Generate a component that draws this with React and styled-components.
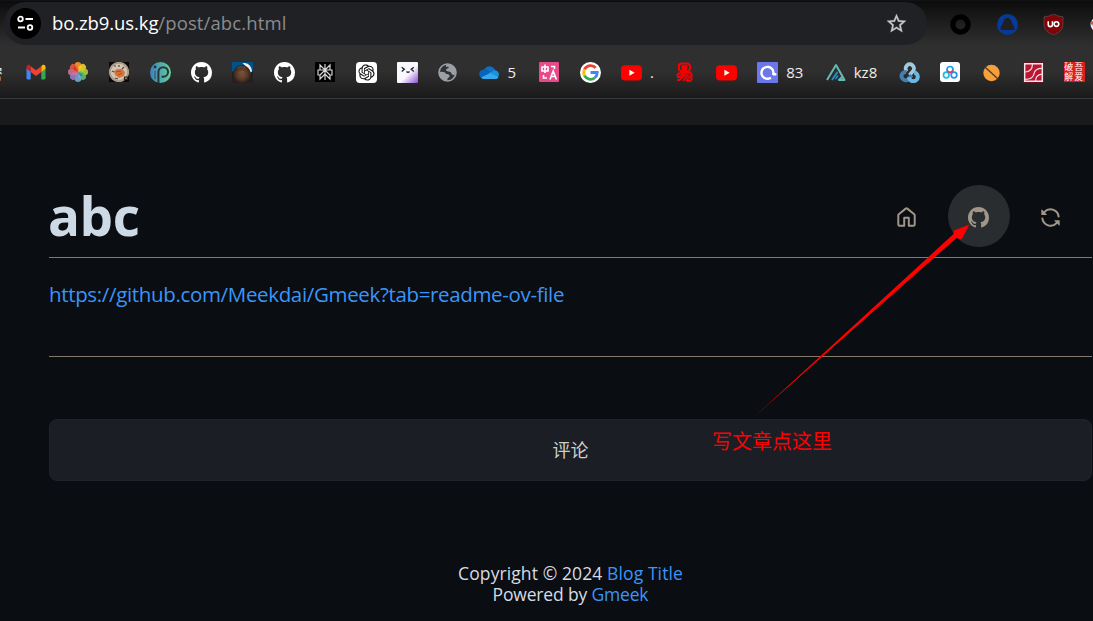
import React from 'react';
import styled, { createGlobalStyle } from 'styled-components';

const Global = createGlobalStyle`
  * { box-sizing: border-box; }
  body { margin: 0; background: #0a0d11; font-family: "Open Sans", "Noto Sans", "Noto Sans CJK SC", sans-serif; overflow: hidden; }
  svg { display: block; flex: none; }
`;

const Window = styled.div`
  position: relative;
  width: 1093px;
  height: 621px;
  overflow: hidden;
  background: #0a0d11;
  display: flex;
  flex-direction: column;
`;

const Chrome = styled.header`
  height: 99px;
  flex: none;
  border-top: 1px solid #111213;
  border-bottom: 1px solid #3a3939;
  background: linear-gradient(#0c0c0c 0, #131313 8px, #2f2f2f 45px, #2f2f2f 70px, #1a1a1a 97px);
`;

const AddressRow = styled.div`
  display: flex;
  height: 45px;
  padding: 1px 0 0 4px;
`;

const AddressBar = styled.div`
  flex: none;
  width: 923px;
  height: 43px;
  border-radius: 22px;
  background: #202124;
  display: flex;
  align-items: center;
  padding: 0 19px 0 6px;
`;

const SiteButton = styled.span`
  width: 31px;
  height: 31px;
  border-radius: 50%;
  background: #000;
  display: grid;
  place-items: center;
`;

const Address = styled.span`
  flex: 1;
  margin-left: 11px;
  margin-top: -1px;
  font-size: 18.5px;
  line-height: 24px;
  letter-spacing: 0.12px;
  color: #8b8c8e;
  white-space: nowrap;
`;

const Host = styled.span`
  color: #fff;
  letter-spacing: -0.1px;
`;

const Extensions = styled.div`
  display: flex;
  align-items: center;
  gap: 25.5px;
  padding-left: 23px;
  white-space: nowrap;
`;

const Bookmarks = styled.nav`
  display: flex;
  align-items: center;
  gap: 21.2px;
  height: 52px;
  margin-left: -12.5px;
`;

const Bookmark = styled.span`
  display: flex;
  align-items: center;
  flex: none;
  gap: 8px;
  width: ${p => p.$width || 20}px;
  height: 20px;
  font-size: 15px;
  color: #eee;
  white-space: nowrap;
`;

const Strip = styled.div`
  height: 26px;
  flex: none;
  background: #191a1b;
`;

const Page = styled.main`
  flex: 1;
  padding: 60px 1px 0 49px;
`;

const Header = styled.div`
  display: flex;
  justify-content: space-between;
  height: 73px;
  border-bottom: 1px solid #82796b;
`;

const Title = styled.h1`
  margin: 0 0 0 -1px;
  font-size: 53px;
  line-height: 62px;
  font-weight: 700;
  letter-spacing: -0.4px;
  color: #cddae6;
`;

const Actions = styled.div`
  display: flex;
  gap: 10px;
  padding-right: 10px;
`;

const ActionButton = styled.button`
  width: 62px;
  height: 62px;
  padding: 2px 2px 0 0;
  border: 0;
  border-radius: 50%;
  display: grid;
  place-items: center;
  background: ${p => (p.$active ? '#292d2f' : 'transparent')};
  color: #a19689;
`;

const Body = styled.article`
  height: 99px;
  padding-top: 22px;
  border-bottom: 1px solid #82796b;
  font-size: 20.5px;
  line-height: 28px;
  letter-spacing: -0.34px;
`;

const Link = styled.a`
  color: #3c95f8;
`;

const Comments = styled.button`
  display: block;
  width: 100%;
  height: 62px;
  margin-top: 62px;
  padding: 0 0 2px;
  border: 1px solid #20242a;
  border-radius: 8px;
  background: #1c1e25;
  color: #d2cec8;
  font: 18px "Noto Sans CJK SC", sans-serif;
`;

const Footer = styled.footer`
  margin-top: 82px;
  text-align: center;
  font-size: 17.5px;
  line-height: 21px;
  color: #d5dce3;
`;

const FooterLine = styled.div`
  letter-spacing: ${p => p.$spacing};
`;

const Annotation = styled.div`
  position: absolute;
  left: 712px;
  top: 426px;
  font: 20px/30px "Noto Sans CJK SC", sans-serif;
  color: #f00;
  white-space: nowrap;
`;

const ArrowLayer = styled.svg`
  position: absolute;
  left: 750px;
  top: 220px;
`;

const octocat = 'M8 0C3.58 0 0 3.58 0 8c0 3.54 2.29 6.53 5.47 7.59.4.07.55-.17.55-.38 0-.19-.01-.82-.01-1.49-2.01.37-2.53-.49-2.69-.94-.09-.23-.48-.94-.82-1.13-.28-.15-.68-.52-.01-.53.63-.01 1.08.58 1.23.82.72 1.21 1.87.87 2.33.66.07-.52.28-.87.51-1.07-1.78-.2-3.64-.89-3.64-3.95 0-.87.31-1.59.82-2.15-.08-.2-.36-1.02.08-2.12 0 0 .67-.21 2.2.82.64-.18 1.32-.27 2-.27s1.36.09 2 .27c1.53-1.04 2.2-.82 2.2-.82.44 1.1.16 1.92.08 2.12.51.56.82 1.27.82 2.15 0 3.07-1.87 3.75-3.65 3.95.29.25.54.73.54 1.48 0 1.07-.01 1.93-.01 2.2 0 .21.15.46.55.38A8.01 8.01 0 0 0 16 8c0-4.42-3.58-8-8-8Z';
const home = 'M6.906.664a1.749 1.749 0 0 1 2.187 0l5.25 4.2c.415.332.657.835.657 1.367v7.019A1.75 1.75 0 0 1 13.25 15h-3.5a.75.75 0 0 1-.75-.75V9H7v5.25a.75.75 0 0 1-.75.75h-3.5A1.75 1.75 0 0 1 1 13.25V6.23c0-.531.242-1.034.657-1.366l5.25-4.2Zm1.25 1.171a.25.25 0 0 0-.312 0l-5.25 4.2a.25.25 0 0 0-.094.196v7.019c0 .138.112.25.25.25H5.5V8.25a.75.75 0 0 1 .75-.75h3.5a.75.75 0 0 1 .75.75v5.25h2.75a.25.25 0 0 0 .25-.25V6.23a.25.25 0 0 0-.094-.195Z';
const sync = 'M1.705 8.005a.75.75 0 0 1 .834.656 5.5 5.5 0 0 0 9.592 2.97l-1.204-1.204a.25.25 0 0 1 .177-.427h3.646a.25.25 0 0 1 .25.25v3.646a.25.25 0 0 1-.427.177l-1.38-1.38A7.002 7.002 0 0 1 1.05 8.84a.75.75 0 0 1 .656-.834ZM8 2.5a5.487 5.487 0 0 0-4.131 1.869l1.204 1.204A.25.25 0 0 1 4.896 6H1.25A.25.25 0 0 1 1 5.75V2.104a.25.25 0 0 1 .427-.177l1.38 1.38A7.002 7.002 0 0 1 14.95 7.16a.75.75 0 0 1-1.49.178A5.5 5.5 0 0 0 8 2.5Z';

const Octicon = ({ d, size = 21, color = 'currentColor' }) => (
  <svg width={size} height={size} viewBox="0 0 16 16" fill={color}><path d={d} /></svg>
);
const Icon = ({ children, size = 20 }) => (
  <svg width={size} height={size} viewBox="0 0 20 20" fill="none">{children}</svg>
);

const Gmail = () => (
  <Icon>
    <path d="M.5 6v10.2c0 .7.5 1.2 1.2 1.2h3V9Z" fill="#4285f4" />
    <path d="M15.3 9v8.4h3c.7 0 1.2-.5 1.2-1.2V6Z" fill="#34a853" />
    <path d="M15.3 4.4V10l4.2-3.2V5c0-2-2-2.700-3.300-1.700Z" fill="#fbbc04" />
    <path d="M.5 6.800 4.700 10V4.400L3.800 3.300C2.500 2.300.5 3 .5 5Z" fill="#c5221f" />
    <path d="M4.700 10V4.200L10 8.200l5.300-4V10L10 14Z" fill="#ea4335" />
  </Icon>
);
const petals = ['#ff9d1e', '#f2d52a', '#b7d332', '#62b97d', '#6eafd8', '#9281c1', '#c576aa', '#ef5b44'];
const Photos = () => (
  <Icon>
    {petals.map((c, i) => (
      <rect key={c} x="6.800" y="0" width="6.400" height="9.500" rx="3.200" fill={c} opacity=".88" transform={`rotate(${i * 45} 10 10)`} />
    ))}
    <path d="m10 10-5-3 2-3 3 6M10 10l-5 2" fill="#c52325" opacity=".7" />
    <path d="m10 10 5 2-2 3-3-5" fill="#268c57" opacity=".8" />
  </Icon>
);
const Plate = () => (
  <Icon>
    <path fill="#080808" d="M0 0h20v20H0z" />
    <circle cx="10" cy="10" r="10.200" fill="#a89a88" />
    <circle cx="10" cy="10" r="8.300" fill="#d2c5b3" />
    <path d="m5 9 3-2h5l3 3-1 4-5 2-4-3Z" fill="#d9743b" />
    <path d="M5 4h2m3-1v2m5 0-2 2M3 9l2 1m1 6 3 1" stroke="#504840" strokeWidth="1.200" />
    <path d="m7 10 5-1m-3 4 4-2" stroke="#a84721" />
    <path d="M15.500 19v-4h3v2.500h-3" stroke="#29251f" strokeWidth="1.200" />
  </Icon>
);
const PMark = () => (
  <Icon size={21}>
    <defs><linearGradient id="pg"><stop stopColor="#3d82bd" /><stop offset="1" stopColor="#67cf99" /></linearGradient></defs>
    <circle cx="10" cy="10" r="10" fill="url(#pg)" />
    <circle cx="4.800" cy="4.800" r="1.400" fill="#26343b" />
    <path d="M8 20V9.500a4.600 4.600 0 1 1 4.600 4.600H11" stroke="#26373b" strokeWidth="1.900" />
    <path d="M4.800 8.500v8" stroke="#26373b" strokeWidth="1.200" opacity=".6" />
  </Icon>
);
const Portrait = () => (
  <Icon size={21}>
    <defs><radialGradient id="brown"><stop stopColor="#76523a" /><stop offset=".6" stopColor="#5a3a27" /><stop offset="1" stopColor="#2c211c" /></radialGradient></defs>
    <path d="M0 0h20v20H0z" fill="#25201f" />
    <path d="M0 0h20v9H0z" fill="#00528a" />
    <path d="M10 1c6-1 9 4 9 8l-3 2-3-7Z" fill="#eee" />
    <path d="M1 12C1 6 5 3 10 3s8 5 8 9-3 8-9 8-8-4-8-8Z" fill="url(#brown)" />
    <path d="M5 6q4-3 8 0m-6 4q3-2 5 0" stroke="#8b6950" strokeWidth=".8" opacity=".7" />
  </Icon>
);
const Perplexity = () => (
  <Icon>
    <path fill="#000" d="M0 0h20v20H0z" />
    <path d="M10 2v16M5 3l5 5 5-5v5H5V3ZM5 13H3V8h14v5h-2M10 8l-5 5v4l5-5 5 5v-4l-5-5Z" stroke="#d8d8d8" strokeWidth="1.150" />
  </Icon>
);
const OpenAI = () => (
  <Icon size={21}>
    <rect width="20" height="20" rx="3.500" fill="#fff" />
    <g transform="translate(2.300 2.300) scale(.64)">
      <path fill="#111" d="M22.282 9.821a5.985 5.985 0 0 0-.516-4.910 6.046 6.046 0 0 0-6.510-2.900A6.065 6.065 0 0 0 4.981 4.180a5.985 5.985 0 0 0-3.998 2.900 6.046 6.046 0 0 0 .743 7.097 5.980 5.980 0 0 0 .510 4.911 6.051 6.051 0 0 0 6.515 2.900A5.985 5.985 0 0 0 13.260 24a6.056 6.056 0 0 0 5.772-4.206 5.990 5.990 0 0 0 3.997-2.900 6.056 6.056 0 0 0-.747-7.073zM13.260 22.430a4.476 4.476 0 0 1-2.876-1.040l.141-.081 4.779-2.758a.795.795 0 0 0 .392-.681v-6.737l2.020 1.168a.071.071 0 0 1 .038.052v5.583a4.504 4.504 0 0 1-4.494 4.494zM3.600 18.304a4.470 4.470 0 0 1-.535-3.014l.142.085 4.783 2.759a.771.771 0 0 0 .780 0l5.843-3.369v2.332a.080.080 0 0 1-.033.062L9.740 19.950a4.500 4.500 0 0 1-6.140-1.646zM2.340 7.896a4.485 4.485 0 0 1 2.366-1.973V11.600a.766.766 0 0 0 .388.676l5.815 3.355-2.020 1.168a.076.076 0 0 1-.071 0l-4.830-2.786A4.504 4.504 0 0 1 2.340 7.872zm16.597 3.855-5.833-3.387L15.119 7.200a.076.076 0 0 1 .071 0l4.830 2.791a4.494 4.494 0 0 1-.676 8.105v-5.678a.790.790 0 0 0-.407-.667zm2.010-3.023-.141-.085-4.774-2.782a.776.776 0 0 0-.785 0L9.409 9.230V6.897a.066.066 0 0 1 .028-.061l4.830-2.787a4.500 4.500 0 0 1 6.680 4.660zm-12.640 4.135-2.020-1.164a.080.080 0 0 1-.038-.057V6.075a4.500 4.500 0 0 1 7.375-3.453l-.142.080-4.778 2.758a.795.795 0 0 0-.393.681zm1.097-2.365 2.602-1.500 2.607 1.500v2.999l-2.597 1.500-2.607-1.500Z" />
    </g>
  </Icon>
);
const Face = () => (
  <Icon size={21}>
    <defs><linearGradient id="face" x1="0" y1="0" x2="1" y2="1"><stop offset=".55" stopColor="#faf8ff" /><stop offset="1" stopColor="#8c4fd2" /></linearGradient></defs>
    <rect width="20" height="20" rx="1" fill="url(#face)" />
    <path d="m4.500 5 2.500 2-2.500 2M16 5l-2.500 2L16 9m-7 0q1.500 1.500 3 0" stroke="#272536" strokeWidth="1.300" />
  </Icon>
);
const Globe = () => (
  <Icon>
    <circle cx="9.500" cy="10.500" r="8.500" fill="#303234" stroke="#9aa0a6" strokeWidth="1.600" />
    <path d="M1.500 10c4-.5 6 .5 6.500 2 2 0 4 .5 3.500 2.500-.3 1.200-2 1-2 2.500l-.5 2C4.500 19 1 15 1.500 10ZM8 3c4-1.500 9 1 10 6l-1.500 4c-3 .5-3-2-4-3l-4-1c-1-1.500 0-2.500 2-2.700V4.500L8 5Z" fill="#9aa0a6" />
  </Icon>
);
const Cloud = () => (
  <Icon>
    <path d="M5 8a6 6 0 0 1 10.500-1L18 10l-8 2Z" fill="#0873cc" />
    <path d="M4.500 7.500C7 6 9 8 12 10l-9 6C-1 15-1 8 4.500 7.500Z" fill="#0864b8" />
    <path d="m10 11 5-2.500c3-.5 5 1.500 5 4l-1 3-9-3Z" fill="#1c91df" />
    <path d="m2 15.500 9-4.500 8.500 4c-.8 1.700-2 2-3 2H5q-2 0-3-1.500Z" fill="#36a9ed" />
  </Icon>
);
const Translate = () => (
  <Icon>
    <rect width="20" height="20" rx="1" fill="#e74989" />
    <path d="M3 5h6v4H3zM6 2.500V11M12 4.500h3.500V7M4.500 13v3H8M11 17.500l3.200-8.500 3.200 8.500m-5.300-3h4.200" stroke="#fff" strokeWidth="1.600" />
  </Icon>
);
const Google = () => (
  <Icon size={21}>
    <circle cx="10" cy="10" r="10" fill="#fff" />
    <path d="M15 5.600A6.500 6.500 0 0 0 4.300 7" stroke="#ea4335" strokeWidth="2.700" />
    <path d="M4.300 7a6.500 6.500 0 0 0 0 6" stroke="#fbbc05" strokeWidth="2.700" />
    <path d="M4.300 13a6.500 6.500 0 0 0 9.900 2" stroke="#34a853" strokeWidth="2.700" />
    <path d="M10 10h6.400c0 2-.8 3.800-2.200 5" stroke="#4285f4" strokeWidth="2.700" />
  </Icon>
);
const YouTube = () => (
  <Icon size={21}>
    <rect x="0" y="3" width="20" height="14.500" rx="3.800" fill="#f00" />
    <path d="m8 7.400 5 2.900-5 2.900Z" fill="#fff" />
  </Icon>
);
const RedMark = () => (
  <Icon>
    <path d="M6 1.500h7l2 2V7l-2 2.500H6L4 7.500v-5ZM6.500 6h5V4h-4v4H12" stroke="#f50000" strokeWidth="2" />
    <path d="M2 14c1-3 4-3.500 6-3.500h7.500l1 2v5L15 19h-3M9 11l-4.500 4H2m9-3-6.500 6H2m11.500-6L8 19m7-5-4 5" stroke="#f50000" strokeWidth="2" />
  </Icon>
);
const Swirl = () => (
  <Icon size={21}>
    <rect width="20" height="20" rx="1" fill="#6a78ec" />
    <path d="M12.500 15.400a5.700 5.700 0 1 1 3-3.800h2" stroke="#fff" strokeWidth="2.300" strokeLinecap="round" strokeLinejoin="round" />
  </Icon>
);
const Peak = () => (
  <Icon>
    <path d="M1 18 10 3l8.500 15H13l3-3" stroke="#66bbb1" strokeWidth="2" strokeLinejoin="round" />
    <path d="m6 18 5.500-8" stroke="#278bc7" strokeWidth="2" /><path d="m9.500 17 2.500-3.500" stroke="#278bc7" strokeWidth="1.600" />
  </Icon>
);
const Knot = () => (
  <Icon size={21}>
    <path d="M7.500 9A4 4 0 1 1 13.500 8.500L10 12.500" stroke="#a1cae0" strokeWidth="3.600" />
    <path d="M7 9.500A4 4 0 1 0 9 16.500l3-4" stroke="#447eaf" strokeWidth="3.800" />
    <path d="M9.500 14.500A4.200 4.200 0 1 0 14.500 10" stroke="#69b9e2" strokeWidth="3.800" />
  </Icon>
);
const Baidu = () => (
  <Icon>
    <rect width="20" height="20" rx="3" fill="#fff" />
    <circle cx="10" cy="7.500" r="3" stroke="#159de7" strokeWidth="1.700" />
    <circle cx="6.300" cy="13" r="2.800" stroke="#15bee8" strokeWidth="1.700" />
    <circle cx="14" cy="13" r="2.800" stroke="#2492e8" strokeWidth="1.700" />
    <path d="M7.200 8.500a3 3 0 0 0 5.600 0" stroke="#ed365d" strokeWidth="1.700" />
  </Icon>
);
const Orange = () => (
  <Icon size={21}><circle cx="10" cy="10.500" r="7.800" fill="#f5a03b" /><path d="m3.500 4.500 13 12" stroke="#4f3720" strokeWidth="1.200" /></Icon>
);
const RedTile = () => (
  <Icon size={21}>
    <path fill="#5f1420" d="M0 0h20v20H0z" />
    <path d="M1.600 1.600h16.800v16.800H1.600z" fill="#ba1631" stroke="#f3e7e7" strokeWidth="1.400" />
    <path d="M2 9.500c4 0 7-2.500 7-7.500M18 6c-5 0-7 2-7.500 5S8 16.500 2 16.500M12 18c0-4 2-6 6-6.500" stroke="#f3dcde" strokeWidth="1.100" />
  </Icon>
);

const Seal = styled.span`
  width: 21px;
  height: 20px;
  flex: none;
  background: #e21c1c;
  color: #fff;
  display: grid;
  grid-template: 10px 10px / 10px 10px;
  font: 9px/10px "Noto Sans CJK SC", sans-serif;
  text-align: center;
`;

const bookmarks = [
  { label: '密' },
  { icon: <Gmail /> }, { icon: <Photos /> }, { icon: <Plate /> }, { icon: <PMark /> },
  { icon: <Octicon d={octocat} color="#fff" /> }, { icon: <Portrait /> },
  { icon: <Octicon d={octocat} color="#fff" /> }, { icon: <Perplexity /> },
  { icon: <OpenAI /> }, { icon: <Face /> }, { icon: <Globe /> },
  { icon: <Cloud />, label: '5', width: 38 }, { icon: <Translate /> }, { icon: <Google /> },
  { icon: <YouTube />, label: '.', width: 32.7 }, { icon: <RedMark /> }, { icon: <YouTube /> },
  { icon: <Swirl />, label: '83', width: 47.3 }, { icon: <Peak />, label: 'kz8', width: 52.2 },
  { icon: <Knot /> }, { icon: <Baidu /> }, { icon: <Orange /> }, { icon: <RedTile /> },
  { icon: <Seal><span>破</span><span>吾</span><span>解</span><span>爱</span></Seal> },
];

export default function App() {
  return (
    <Window>
      <Global />
      <Chrome>
        <AddressRow>
          <AddressBar>
            <SiteButton>
              <svg width="17" height="17" viewBox="0 0 17 17" fill="none" stroke="#fff" strokeWidth="1.800">
                <circle cx="3.500" cy="4" r="2.300" /><path d="M8.500 4H16M1 12.500h7" /><circle cx="13" cy="12.500" r="2.300" />
              </svg>
            </SiteButton>
            <Address><Host>bo.zb9.us.kg</Host>/post/abc.html</Address>
            <svg width="23" height="23" viewBox="0 0 24 24" fill="#c7c7c7" stroke="#c7c7c7" strokeWidth=".3">
              <path d="m22 9.240-7.190-.620L12 2 9.190 8.630 2 9.240l5.460 4.730L5.820 21 12 17.270 18.180 21l-1.630-7.030ZM12 15.400l-3.760 2.270 1-4.280-3.320-2.880 4.380-.380L12 6.100l1.710 4.040 4.380.380-3.320 2.880 1 4.280Z" />
            </svg>
          </AddressBar>
          <Extensions>
            <Icon size={21}><circle cx="10" cy="10" r="7.300" stroke="#000" strokeWidth="5" /></Icon>
            <Icon size={21}>
              <circle cx="10" cy="10" r="10" fill="#07399a" />
              <path d="M10 3.500c3 0 3.500 3 4.500 5.500 1 2.500 3 4 2 5.500-1 1.300-3.500.7-6.500.7s-5.500.6-6.500-.7c-1-1.500 1-3 2-5.500 1-2.500 1.500-5.500 4.500-5.500Z" fill="#202024" />
            </Icon>
            <Icon size={21}>
              <path d="M10 0q4 2.500 9 2.700V10c0 5-4 8-9 10-5-2-9-5-9-10V2.700Q6 2.500 10 0Z" fill="#800407" stroke="#5c5050" strokeWidth=".7" />
              <path d="M5 7v3a2 2 0 0 0 4 0V7" stroke="#fff" strokeWidth="1.500" />
              <circle cx="12.800" cy="9.600" r="2.200" stroke="#fff" strokeWidth="1.500" />
            </Icon>
            <Icon size={21}><circle cx="7.500" cy="10" r="6" fill="#257b8a" stroke="#eee" strokeWidth="2" /><path d="M1 7h3v3H1z" fill="#d74e40" /></Icon>
          </Extensions>
        </AddressRow>
        <Bookmarks>
          {bookmarks.map((b, i) => (
            <Bookmark key={i} $width={b.width || (i === 0 ? 17.7 : 20)}>{b.icon}{b.label}</Bookmark>
          ))}
        </Bookmarks>
      </Chrome>
      <Strip />
      <Page>
        <Header>
          <Title>abc</Title>
          <Actions>
            <ActionButton aria-label="Home"><Octicon d={home} /></ActionButton>
            <ActionButton $active aria-label="GitHub"><Octicon d={octocat} /></ActionButton>
            <ActionButton aria-label="Refresh"><Octicon d={sync} /></ActionButton>
          </Actions>
        </Header>
        <Body><Link>https://github.com/Meekdai/Gmeek?tab=readme-ov-file</Link></Body>
        <Comments>评论</Comments>
        <Footer>
          <FooterLine $spacing="0.1px">Copyright © 2024 <Link>Blog Title</Link></FooterLine>
          <FooterLine $spacing="-0.17px">Powered by <Link>Gmeek</Link></FooterLine>
        </Footer>
      </Page>
      <ArrowLayer width="230" height="200" viewBox="0 0 230 200">
        <defs>
          <linearGradient id="tail" gradientUnits="userSpaceOnUse" x1="5" y1="197" x2="35" y2="170">
            <stop stopColor="#f00" stopOpacity=".6" /><stop offset="1" stopColor="#f00" />
          </linearGradient>
        </defs>
        <path d="M4 197 203.500 14 204 10.500 219.500 4.500 211.500 19.500 206.500 18Z" fill="url(#tail)" />
      </ArrowLayer>
      <Annotation>写文章点这里</Annotation>
    </Window>
  );
}
